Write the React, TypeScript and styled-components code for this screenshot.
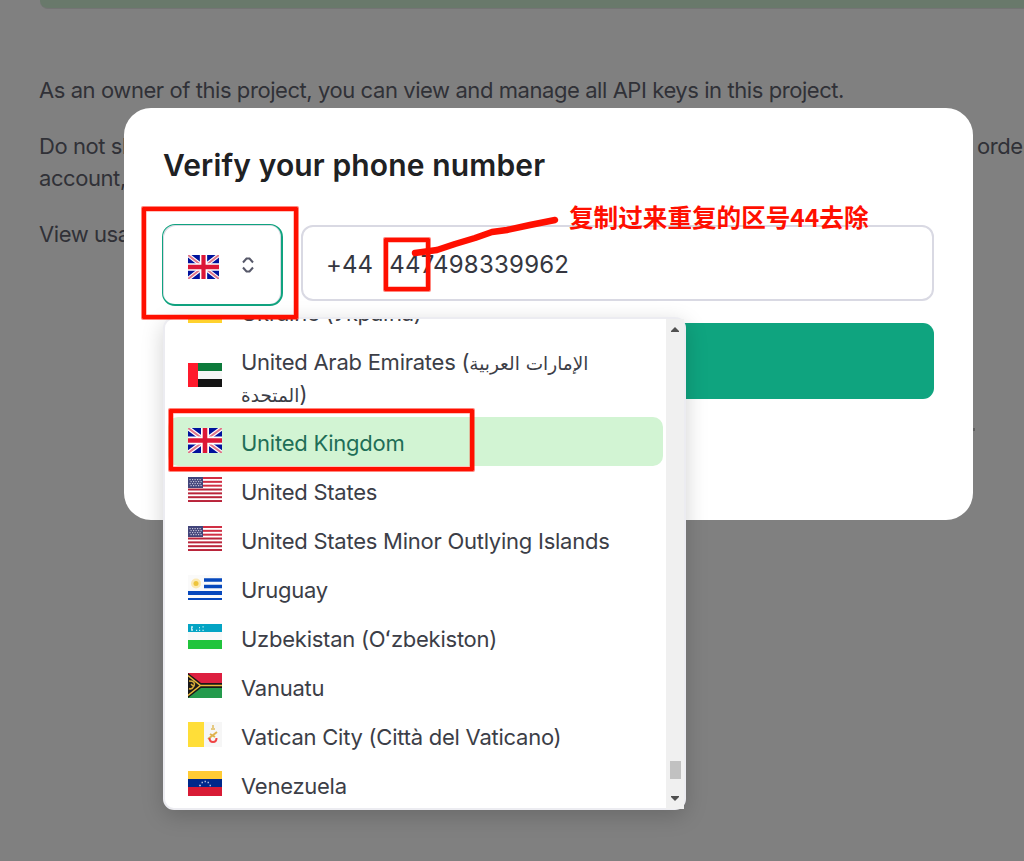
import React from 'react';
import styled, { createGlobalStyle } from 'styled-components';

const GlobalStyle = createGlobalStyle`
  * { box-sizing: border-box; }
  body { margin: 0; overflow: hidden; background: #808080; font-family: Inter, 'Liberation Sans', sans-serif; }
`;

const Page = styled.div`
  position: relative;
  width: 1024px;
  height: 861px;
  overflow: hidden;
  background: #808080;
`;

const Backdrop = styled.main`
  display: flex;
  flex-direction: column;
  padding-left: 39px;
  font-size: 22px;
  line-height: 32px;
  letter-spacing: -0.43px;
  color: #303137;
  white-space: nowrap;
`;

const Banner = styled.div`
  height: 9px;
  margin-bottom: 65px;
  margin-left: 1px;
  background: #69796b;
  border-bottom: 1px solid #747474;
  border-bottom-left-radius: 8px;
`;

const Paragraph = styled.p`
  margin: 0 0 24px;
`;

const Line = styled.span`
  display: flex;
`;

const Lead = styled.span`
  flex: none;
  width: 938px;
`;

const Dialog = styled.section`
  position: absolute;
  left: 124px;
  top: 108px;
  width: 849px;
  height: 412px;
  padding: 36px 39px 0;
  border-radius: 27px;
  background: #fff;
`;

const Title = styled.h1`
  margin: 0 0 38px;
  font-size: 30px;
  line-height: 42px;
  font-weight: 600;
  letter-spacing: 0.13px;
  color: #202123;
  white-space: nowrap;
`;

const Fields = styled.div`
  display: flex;
  align-items: flex-start;
  gap: 18px;
  margin-left: -1px;
  height: 99px;
`;

const CountryButton = styled.button`
  display: flex;
  align-items: center;
  gap: 22px;
  width: 121px;
  height: 82px;
  padding: 0 0 0 25px;
  border: 1px solid #10a37f;
  border-right-width: 2px;
  border-bottom-width: 2px;
  border-radius: 13px;
  background: #fff;
  box-shadow: inset 1px 1px 0 #d9d9e3, inset -1px 0 0 #d9d9e3;
`;

const PhoneField = styled.div`
  display: flex;
  align-items: center;
  gap: 16px;
  width: 633px;
  height: 76px;
  margin-top: 1px;
  padding: 2px 0 0 23px;
  border: 2px solid #d9d9e3;
  border-radius: 12px;
  font-size: 24px;
  color: #353740;
`;

const Prefix = styled.span`
  letter-spacing: 0.1px;
`;

const Digits = styled.span`
  letter-spacing: 0.22px;
`;

const Submit = styled.div`
  height: 76px;
  border-radius: 11px;
  background: #0fa47f;
`;

const Menu = styled.div`
  position: absolute;
  left: 163px;
  top: 317px;
  display: flex;
  width: 523px;
  height: 493px;
  border: 2px solid #ececf1;
  border-radius: 11px;
  background: #fff;
  box-shadow: 0 6px 22px rgba(0, 0, 0, 0.18);
`;

const Options = styled.ul`
  display: flex;
  flex: 1;
  flex-direction: column;
  justify-content: flex-end;
  margin: 0;
  padding: 0 3px;
  overflow: hidden;
  list-style: none;
`;

const Option = styled.li<{ $selected?: boolean }>`
  display: flex;
  flex: none;
  align-items: center;
  gap: 19px;
  padding: 9px 0 8px 20px;
  border-radius: 10px;
  background: ${p => (p.$selected ? '#d2f4d3' : 'transparent')};
  color: ${p => (p.$selected ? '#1f6e57' : '#3c3e47')};
  font-size: 22px;
  line-height: 32px;
  letter-spacing: -0.25px;
  white-space: nowrap;

  &:last-child { margin-bottom: -1px; }
`;

const Label = styled.span`
  position: relative;
  top: 1px;
`;

const Arabic = styled.span`
  font-family: 'DejaVu Sans', sans-serif;
  font-size: 18.5px;
  line-height: 0;
  letter-spacing: 0;
`;

const Flag = styled.svg<{ $button?: boolean }>`
  display: block;
  flex: none;
  width: ${p => (p.$button ? 31 : 34)}px;
  height: ${p => (p.$button ? 24 : 25)}px;
  margin-top: ${p => (p.$button ? 5 : -3)}px;
`;

const Scrollbar = styled.div`
  display: flex;
  flex-direction: column;
  align-items: center;
  width: 18px;
  height: 490px;
  padding: 8px 0 8px;
  background: #f0f0f0;
`;

const Arrow = styled.svg`
  display: block;
  width: 8px;
  height: 5px;
  fill: #505050;
`;

const Thumb = styled.div`
  width: 11px;
  height: 18px;
  margin: auto 0 17px;
  background: #c1c1c1;
`;

const Mark = styled.div<{ $x: number; $y: number; $w: number; $h: number }>`
  position: absolute;
  left: ${p => p.$x}px;
  top: ${p => p.$y}px;
  width: ${p => p.$w}px;
  height: ${p => p.$h}px;
  border: 4px solid #ff0f00;
  border-radius: 1px;
  box-shadow: 0 0 0 1px rgba(255, 15, 0, 0.5), inset 0 0 0 0.5px rgba(255, 15, 0, 0.5);
`;

const Stroke = styled.svg`
  position: absolute;
  left: 400px;
  top: 205px;
  width: 170px;
  height: 60px;
`;

const Note = styled.div`
  position: absolute;
  left: 569px;
  top: 198px;
  font: 700 24.6px/36px 'Noto Sans CJK SC', sans-serif;
  color: #ff0f00;
  white-space: nowrap;
`;

const Speck = styled.i`
  position: absolute;
  left: 972px;
  top: 428px;
  width: 3px;
  height: 3px;
  background: #606060;
`;

const UnitedKingdom = ({ button }: { button?: boolean }) => (
  <Flag $button={button} viewBox="0 0 34 25" preserveAspectRatio="none">
    <rect width="34" height="25" fill="#00129c" />
    <path d="M0 0L34 25M34 0L0 25" stroke="#fff" strokeWidth="4.4" />
    <path d="M0 0L34 25M34 0L0 25" stroke="#e0768a" strokeWidth="2" />
    <path d="M17 0V25M0 12.5H34" stroke="#fff" strokeWidth="8" />
    <path d="M17 0V25M0 12.5H34" stroke="#dc1636" strokeWidth="4.6" />
  </Flag>
);

const UnitedStates = () => (
  <Flag viewBox="0 0 34 25">
    <rect width="34" height="25" fill="#fff" />
    {[0, 1, 2, 3, 4, 5, 6].map(i => (
      <rect key={i} y={i * 3.84} width="34" height="2" fill={i < 3 ? '#d02f44' : '#b9243a'} />
    ))}
    <rect width="15" height={11} fill="#42447a" />
    {[2, 4, 6, 8].map((y, r) =>
      [1.5, 4, 6.5, 9, 11.5].map(x => (
        <rect key={`${x}-${y}`} x={x + (r % 2)} y={y} width="1.2" height="1.2" fill="#c3c3d8" />
      ))
    )}
  </Flag>
);

const Ukraine = () => (
  <Flag viewBox="0 0 34 25">
    <rect width="34" height="12" fill="#2a6fd6" />
    <rect y="12" width="34" height="13" fill="#ffd22e" />
  </Flag>
);

const Emirates = () => (
  <Flag viewBox="0 0 34 25">
    <rect x="10" width="24" height="8" fill="#0d7a3b" />
    <rect x="10" y="8" width="24" height="8" fill="#f6f6f6" />
    <rect x="10" y="16" width="24" height="8" fill="#141414" />
    <rect width="10" height="24" fill="#ff1a2c" />
  </Flag>
);

const Uruguay = () => (
  <Flag viewBox="0 0 34 25">
    <rect width="34" height="25" fill="#fafafa" />
    <path d="M16 5H34M16 11.5H34" stroke="#0648bd" strokeWidth="3.4" />
    <path d="M0 18H34" stroke="#0648bd" strokeWidth="4" />
    <path d="M0 24H34" stroke="#0648bd" strokeWidth="2" />
    <circle cx="8" cy="8.5" r="5" fill="#fbe9b2" />
    <circle cx="8" cy="8.5" r="2.5" fill="#edc43c" />
  </Flag>
);

const Uzbekistan = () => (
  <Flag viewBox="0 0 34 25">
    <rect width="34" height="25" fill="#f8f8f8" />
    <rect width="34" height="8" fill="#04a4c4" />
    <rect y="16" width="34" height="9" fill="#21c43c" />
    <path d="M5 3H3.7V6H5M8 6.4H9.2M11 6.4H12.2M14.5 6.4H15.7M11 3.6H12M14.5 2.8H15.7" fill="none" stroke="#c5eff6" strokeWidth="1.3" />
  </Flag>
);

const Vanuatu = () => (
  <Flag viewBox="0 0 34 25">
    <rect width="34" height="12" fill="#dd1f40" />
    <rect y="12" width="34" height="13" fill="#249a4c" />
    <path d="M0 0L13 10H34V15H13L0 25Z" fill="#1a1818" />
    <path d="M0 2.5L12.5 12.5H34M12.5 12.5L0 22.5" fill="none" stroke="#e8b93a" strokeWidth="1.5" />
    <path d="M1 8Q8 8 6 13Q4 17 1 15.5M3 11L5 13" fill="none" stroke="#d8ab3a" strokeWidth="1.6" />
  </Flag>
);

const Vatican = () => (
  <Flag viewBox="0 0 34 25">
    <rect width="34" height="25" fill="#f6f6f6" />
    <rect width="16" height="25" fill="#ffde38" />
    <path d="M25 3V7M23 7H27" stroke="#e5ca83" strokeWidth="2" />
    <path d="M29 10L20 17M22 12L27 15" stroke="#dfb24d" strokeWidth="2" />
    <path d="M21.5 16Q21.5 20 25 20Q28.5 20 28.5 16" fill="none" stroke="#f04444" strokeWidth="2" />
  </Flag>
);

const Venezuela = () => (
  <Flag viewBox="0 0 34 25">
    <rect width="34" height="8" fill="#ffcb34" />
    <rect y="8" width="34" height="8" fill="#00288a" />
    <rect y="16" width="34" height="9" fill="#d81b35" />
    <path d="M11 14.4H13M13.5 11.4H15M16.5 10.5H18M19.5 11.4H21M21.5 14.4H23" stroke="#aab8dc" strokeWidth="1.5" />
  </Flag>
);

const countries = [
  { name: 'Ukraine (Україна)', flag: <Ukraine /> },
  {
    name: (
      <>
        United Arab Emirates (<Arabic>الإمارات العربية</Arabic>
        <br />
        <Arabic>المتحدة</Arabic>&lrm;)
      </>
    ),
    flag: <Emirates />,
  },
  { name: 'United Kingdom', flag: <UnitedKingdom />, selected: true },
  { name: 'United States', flag: <UnitedStates /> },
  { name: 'United States Minor Outlying Islands', flag: <UnitedStates /> },
  { name: 'Uruguay', flag: <Uruguay /> },
  { name: 'Uzbekistan (Oʻzbekiston)', flag: <Uzbekistan /> },
  { name: 'Vanuatu', flag: <Vanuatu /> },
  { name: 'Vatican City (Città del Vaticano)', flag: <Vatican /> },
  { name: 'Venezuela', flag: <Venezuela /> },
];

export default function App() {
  return (
    <Page>
      <GlobalStyle />
      <Backdrop>
        <Banner />
        <Paragraph>As an owner of this project, you can view and manage all API keys in this project.</Paragraph>
        <Paragraph>
          <Line>
            <Lead>Do not sh</Lead>
            <span>order</span>
          </Line>
          <Line>account,</Line>
        </Paragraph>
        <Paragraph>View usage</Paragraph>
      </Backdrop>
      <Speck />

      <Dialog>
        <Title>Verify your phone number</Title>
        <Fields>
          <CountryButton>
            <UnitedKingdom button />
            <svg width="14" height="18" viewBox="0 0 14 18" fill="none" stroke="#565869" strokeWidth="2">
              <path d="M2 6.5L5.5 2.5H8.5L12 6.5M2 11.5L5.5 15.5H8.5L12 11.5" />
            </svg>
          </CountryButton>
          <PhoneField>
            <Prefix>+44</Prefix>
            <Digits>447498339962</Digits>
          </PhoneField>
        </Fields>
        <Submit />
      </Dialog>

      <Menu>
        <Options>
          {countries.map((c, i) => (
            <Option key={i} $selected={c.selected}>
              {c.flag}
              <Label>{c.name}</Label>
            </Option>
          ))}
        </Options>
        <Scrollbar>
          <Arrow viewBox="0 0 8 5"><path d="M4 0L8 4V5H0V4Z" /></Arrow>
          <Thumb />
          <Arrow viewBox="0 0 8 5"><path d="M4 5L8 1V0H0V1Z" /></Arrow>
        </Scrollbar>
      </Menu>

      <Mark $x={142} $y={207} $w={156} $h={112} />
      <Mark $x={384} $y={238} $w={46} $h={53} />
      <Mark $x={169} $y={409} $w={305} $h={62} />
      <Stroke viewBox="400 205 170 60" fill="none" stroke="#ff0f00" strokeLinecap="round" strokeLinejoin="round">
        <path d="M415 253L437 250L455 244L475 238L492 232L507 230L530 225L555 220" strokeWidth="6.4" />
      </Stroke>
      <Note>复制过来重复的区号44去除</Note>
    </Page>
  );
}
